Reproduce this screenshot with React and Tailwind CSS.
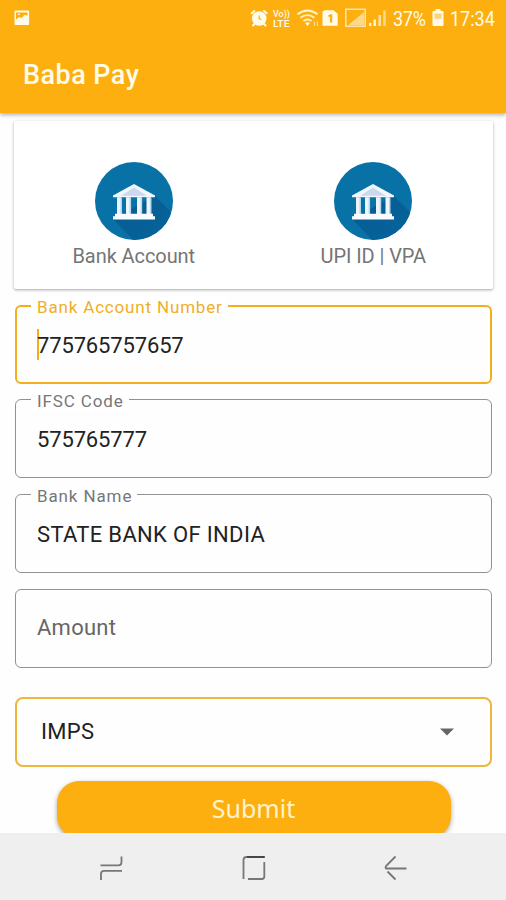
import React from "react";

function PictureIcon() {
  return (
    <svg width="16" height="16" viewBox="0 0 16 16">
      <path fillRule="evenodd" fill="#fffbe8" d="M1.300 .5h13q.8 0 .8.800v13q0 .8-.8.800h-13q-.8 0-.8-.8v-13q0-.8.8-.8ZM2 2.500v7l3-2.500 2.500 1 3-3 3 .500V2.500Z" />
      <path fill="#fffbe8" d="M4 3.700h1.800v1.300H4Z" />
    </svg>
  );
}

function StatusIcons() {
  return (
    <svg width="140" height="24" viewBox="0 0 140 24" fill="#fffbe8" stroke="none">
      {/* alarm */}
      <circle cx="9.200" cy="12.500" r="7.300" />
      <path d="M1.800 7.300 4.300 5M14.100 5l2.500 2.300M4.500 18l-1.500 1.500M14 18l1.500 1.500" stroke="#fffbe8" strokeWidth="2" strokeLinecap="round" />
      <path d="M9.200 9.500v3l2.200 1" stroke="#fdaf10" strokeWidth="1.200" fill="none" />
      {/* network label */}
      <g fontFamily="Roboto, sans-serif" fontWeight="500">
        <text x="23" y="10.800" fontSize="8.500" textLength="17" lengthAdjust="spacingAndGlyphs">Vo))</text>
        <text x="23" y="21" fontSize="8.800" textLength="16.500" lengthAdjust="spacingAndGlyphs">LTE</text>
      </g>
      {/* wifi */}
      <g fill="none" stroke="#fff3d2" strokeWidth="1.800">
        <path d="M47.500 8.200q10-7.400 20 0M50.500 11.700q7-5.200 14 0M53.500 15q4-3 8 0" />
      </g>
      <path d="m57.500 20-2.300-3q2.300-1.600 4.600 0Z" />
      <path d="M64.500 15.500v4.500M67.500 15.500v4.500" stroke="#ffdc93" strokeWidth="1.200" />
      {/* sim */}
      <path fillRule="evenodd" d="M74.500 4.200h9l4.200 3.600v12H72.500v-14Zm3.800 5v1.600h1.700v5.800h2.200V8.200h-1.500Z" />
      {/* signal */}
      <path d="M95.800 3.300h19.400v17H95.800Z" fill="none" stroke="#ffe5ad" strokeWidth="1.500" />
      <path d="M98.500 19 114 6v13Z" fill="#ffd98b" />
      <path d="M120.200 17v3" stroke="#fff3d2" strokeWidth="2.500" />
      <path d="M124.700 13.500V20" stroke="#fff3d2" strokeWidth="2.500" />
      <path d="M129.700 9V20" stroke="#ffe2a0" strokeWidth="2.700" />
      <path d="M134.500 4.500V20" stroke="#ffd98b" strokeWidth="2.500" />
    </svg>
  );
}

function BatteryIcon() {
  return (
    <svg width="12" height="18" viewBox="0 0 12 18">
      <path fill="#fffbe8" d="M3.500 0h5v2h2q1 0 1 1v13q0 1-1 1h-9q-1 0-1-1V3q0-1 1-1h2Z" />
      <path fill="#ffd27a" d="M2.500 4.500h7v5.200h-7Z" />
    </svg>
  );
}

function BankIcon() {
  return (
    <svg width="78" height="78" viewBox="0 0 78 78">
      <defs>
        <clipPath id="disc"><circle cx="39" cy="39" r="39" /></clipPath>
        <linearGradient id="shade" x1="0" y1="0" x2="1" y2="1">
          <stop offset="0" stopColor="#065a8e" />
          <stop offset="1" stopColor="#0666a0" />
        </linearGradient>
      </defs>
      <g clipPath="url(#disc)">
        <path fill="#0872a6" d="M0 0h78v78H0Z" />
        <path fill="url(#shade)" d="M60 34 84 58v26H44L18 57Z" />
      </g>
      <path fill="#f1f7fd" d="M39 22 60 33.500v1.800H18v-1.800Z" />
      <path fill="#cbd9f0" d="m39 25.500 13 8.300H26Z" />
      <path fill="#edf5fc" d="M22 35.300h4.500V52H22ZM31 35.300h4.700V52H31ZM42 35.300h4.700V52H42ZM51.500 35.300H56V52h-4.500Z" />
      <path fill="#b6d4ea" d="M25.500 36h1.500v16h-1.500ZM34.600 36h1.500v16h-1.500ZM45.700 36h1.500v16h-1.500ZM55 36h1.500v16H55Z" />
      <path fill="#f7fbff" d="M20 51.700h38v2.600h2v3.200H18v-3.200h2Z" />
    </svg>
  );
}

function Method({ label }) {
  return (
    <div className="flex flex-1 flex-col items-center pt-[41px]">
      <BankIcon />
      <span className="mt-[3px] whitespace-nowrap text-[20px] leading-[26px] tracking-[-0.080px] text-[#757575]">{label}</span>
    </div>
  );
}

function Field({ label, value, valueClass = "", active = false, className = "" }) {
  return (
    <div className={"relative flex h-[79px] shrink-0 items-center rounded-[6px] " + (active ? "border-[2.500px] border-[#f2ae1c] pl-[20px] " : "border-[1.500px] border-[#929292] pl-[21px] ") + className}>
      {label && (
        <span className={"absolute whitespace-nowrap bg-white pl-[6px] pr-[5px] text-[17px] leading-[20px] " + (active ? "left-[14px] -top-[10px] tracking-[0.830px] text-[#f0ae25]" : "left-[15px] -top-[9px] tracking-[0.880px] text-[#777777]")}>
          {label}
        </span>
      )}
      {active && <span className="-mr-0.5 h-[31px] w-[2px] bg-[#f5ad13]" />}
      <span className={"text-[22px] leading-[26px] " + (label ? "pt-[3px] text-[#222222] " : "pb-0.5 text-[#666666] ") + valueClass}>{value}</span>
    </div>
  );
}

export default function App() {
  return (
    <div className="flex h-[900px] w-[506px] flex-col overflow-hidden bg-[#fefefe] font-['Roboto',sans-serif]">
      <header className="relative flex h-[113px] shrink-0 flex-col bg-[#fdaf10] text-[#fffbe8] shadow-[0_2px_4px_rgba(0,0,0,0.3)]">
        <div className="flex h-9 items-center pl-[14px]">
          <PictureIcon />
          <div className="ml-[220px] flex items-center">
            <StatusIcons />
            <span className="ml-[3px] w-[34px] origin-left scale-x-[0.9] whitespace-nowrap pt-0.5 text-[20px] tracking-[-0.300px]">37%</span>
            <span className="ml-[5px]"><BatteryIcon /></span>
            <span className="ml-[6px] origin-left scale-x-[0.9] pt-0.5 text-[20px]">17:34</span>
          </div>
        </div>
        <h1 className="ml-[23px] mt-[23px] text-[27px] font-medium leading-[32px] tracking-[0.450px]">Baba Pay</h1>
      </header>

      <main className="flex min-h-0 flex-1 flex-col overflow-hidden pl-[15px] pr-[14px] pt-2">
        <section className="-ml-px -mr-px flex h-[168px] shrink-0 rounded-[2px] bg-white shadow-[0_1px_3px_rgba(0,0,0,0.35)]">
          <Method label="Bank Account" />
          <Method label="UPI ID | VPA" />
        </section>
        <Field active label="Bank Account Number" value="775765757657" valueClass="tracking-[-0.150px]" className="mt-4" />
        <Field label="IFSC Code" value="575765777" valueClass="tracking-[-0.150px]" className="mt-[15px]" />
        <Field label="Bank Name" value="STATE BANK OF INDIA" valueClass="tracking-[0.330px]" className="mt-4" />
        <Field value="Amount" valueClass="tracking-[0.250px]" className="mt-4" />
        <div className="mt-[29px] flex h-[70px] shrink-0 items-center justify-between rounded-[8px] border-2 border-[#efb63f] pl-[24px] pr-[36px]">
          <span className="pb-0.5 text-[22px] tracking-[0.300px] text-[#222222]">IMPS</span>
          <svg width="14" height="8" viewBox="0 0 14 8"><path fill="#666" d="M0 .500h14L7 7.500Z" /></svg>
        </div>
        <button className="mt-[14px] h-[57px] w-[394px] shrink-0 self-center rounded-[22px] bg-[#fdaf10] pb-0.5 text-[25px] font-normal text-[#fff3cd] shadow-[0_2px_5px_rgba(0,0,0,0.35)] font-['Noto_Sans',sans-serif]">Submit</button>
      </main>

      <nav className="flex h-[67px] shrink-0 items-center bg-[#efefef] pl-[99px]">
        <svg width="310" height="28" viewBox="0 0 310 28" fill="none" stroke="#777777" strokeWidth="1.800">
          <path d="M1.500 12.300h18q3 0 3-3V3.500M23 17.800H5q-3 0-3 3V27" />
          <path d="M144.500 26V7q0-3 3-3M165.300 9v14.500q0 2.500-2.500 2.500H149" />
          <path d="M147.500 4h18.300" stroke="#333333" />
          <path d="M307.500 15.500H287q-1-1 0-2.500L296.500 3.500M288.500 18.500l8 8" />
        </svg>
      </nav>
    </div>
  );
}
